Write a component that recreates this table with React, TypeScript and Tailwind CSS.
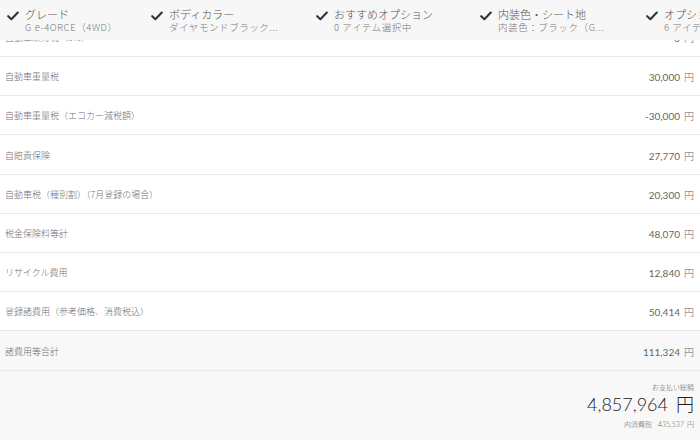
import React from 'react';

interface FeeRow {
  label: string;
  value: string;
  h: string;
  total?: boolean;
}

interface HeaderItem {
  label: string;
  value: string;
  w: string;
}

const headerItems: HeaderItem[] = [
  { label: 'グレード', value: 'G e-4ORCE（4WD）', w: 'w-[151px] pl-[7px]' },
  { label: 'ボディカラー', value: 'ダイヤモンドブラック...', w: 'w-[165px]' },
  { label: 'おすすめオプション', value: '0 アイテム選択中', w: 'w-[164px]' },
  { label: '内装色・シート地', value: '内装色：ブラック（G...', w: 'w-[166px]' },
  { label: 'オプション', value: '6 アイテム選択中', w: 'w-[165px]' },
];

const rows: FeeRow[] = [
  { label: '自動車取得税（3%）', value: '0', h: 'h-[39px]' },
  { label: '自動車重量税', value: '30,000', h: 'h-[39px]' },
  { label: '自動車重量税（エコカー減税額）', value: '-30,000', h: 'h-[39px]' },
  { label: '自賠責保険', value: '27,770', h: 'h-[40px]' },
  { label: '自動車税（種別割）（7月登録の場合）', value: '20,300', h: 'h-[39px]' },
  { label: '税金保険料等計', value: '48,070', h: 'h-[39px]' },
  { label: 'リサイクル費用', value: '12,840', h: 'h-[39px]' },
  { label: '登録諸費用（参考価格、消費税込）', value: '50,414', h: 'h-[39px]' },
  { label: '諸費用等合計', value: '111,324', h: 'h-[40px]', total: true },
];

const jp = "font-['Noto_Sans_CJK_JP',sans-serif]";
const num = "font-['Lato','Noto_Sans_CJK_JP',sans-serif]";

const CheckMark = () => (
  <svg width="12" height="10" viewBox="0 0 12 10" className="shrink-0 mt-[3px]">
    <path d="M1.2 5.2 L4.4 8.2 L10.8 1.6" fill="none" stroke="#333" strokeWidth="2.1" strokeLinecap="round" strokeLinejoin="round" />
  </svg>
);

export default function App() {
  return (
    <div className={`w-[700px] h-[440px] overflow-hidden bg-white flex flex-col ${jp}`}>
      <header className="h-[40px] shrink-0 bg-[#f7f7f7] flex items-start pt-[8px] overflow-hidden whitespace-nowrap relative z-10">
        {headerItems.map((item) => (
          <div key={item.label} className={`${item.w} shrink-0 flex items-start gap-[6px]`}>
            <CheckMark />
            <div className="flex flex-col">
              <span className="text-[11px] font-light text-[#555] leading-[13px]">{item.label}</span>
              <span className="text-[9.5px] font-light text-[#777] leading-[12px] tracking-[0.06em]">{item.value}</span>
            </div>
          </div>
        ))}
      </header>

      <div className="flex-1 overflow-hidden">
        <div className="-mt-[22px]">
          {rows.map((r) => (
            <div
              key={r.label}
              className={`${r.h} flex items-center justify-between pl-[5px] pr-[6px] pt-[2px] border-b border-[#e8e8e8] ${r.total ? 'bg-[#f8f8f8]' : 'bg-white'}`}
            >
              <span className="text-[9px] font-light text-[#707070]">{r.label}</span>
              <span className={`${num} text-[10px] text-[#666]`}>
                {r.value}
                <span className={`${jp} font-light ml-[4px]`}>円</span>
              </span>
            </div>
          ))}

          <div className="h-[80px] bg-[#f8f8f8] flex flex-col items-end pr-[6px] pt-[12px]">
            <span className="text-[7px] font-light text-[#666] leading-[9px]">お支払い総額</span>
            <span className={`${num} text-[18px] font-light text-[#222] leading-[22px]`}>
              4,857,964
              <span className={`${jp} ml-[8px] font-light`}>円</span>
            </span>
            <span className="text-[7px] font-light text-[#666] leading-[9px] mt-[5px]">
              内消費税
              <span className={`${num} ml-[6px]`}>435,537</span>
              <span className="ml-[3px]">円</span>
            </span>
          </div>
        </div>
      </div>
    </div>
  );
}
